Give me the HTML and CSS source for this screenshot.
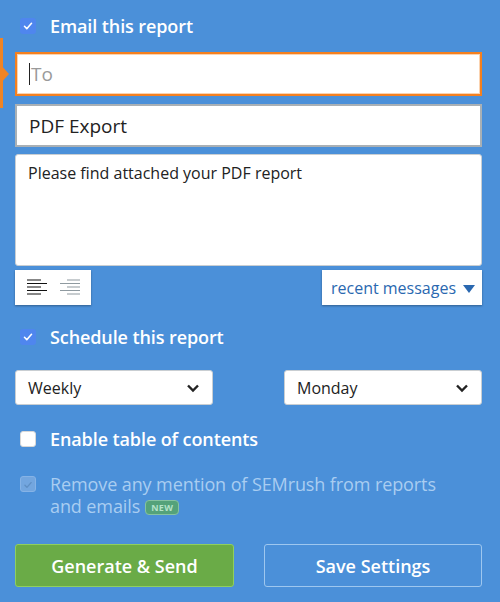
FILE: index.html
```html
<!DOCTYPE html>
<html>
<head>
<meta charset="utf-8">
<link rel="stylesheet" href="styles.css">
</head>
<body>
<div class="marker"><div class="marker-tri"></div></div>
<div class="panel">
  <div class="check-row first">
    <span class="cb checked"><svg viewBox="0 0 16 16" width="16" height="16"><path d="M4.5 8.3l2.3 2.4 4.7-5.4" fill="none" stroke="#fff" stroke-width="1.6" stroke-linecap="round" stroke-linejoin="round"/></svg></span>
    <span class="cb-label">Email this report</span>
  </div>
  <div class="field to"><span class="caret"></span><span class="ph">To</span></div>
  <div class="field subject">PDF Export</div>
  <div class="textarea">Please find attached your PDF report</div>
  <div class="toolbar">
    <div class="align-box">
      <svg width="22" height="22" viewBox="0 0 22 22"><g stroke="#111" stroke-width="1.2"><path d="M1 3h14M1 6.5h20M1 10h14M1 13.5h20M1 17h14"/></g></svg>
      <svg width="22" height="22" viewBox="0 0 22 22"><g stroke="#8f9aa0" stroke-width="1.2"><path d="M8 3h13M1 6.5h20M8 10h13M1 13.5h20M8 17h13"/></g></svg>
    </div>
    <div class="recent">recent messages <span class="tri"></span></div>
  </div>
  <div class="check-row schedule">
    <span class="cb checked"><svg viewBox="0 0 16 16" width="16" height="16"><path d="M4.5 8.3l2.3 2.4 4.7-5.4" fill="none" stroke="#fff" stroke-width="1.6" stroke-linecap="round" stroke-linejoin="round"/></svg></span>
    <span class="cb-label">Schedule this report</span>
  </div>
  <div class="selects">
    <div class="select">Weekly <svg class="chev" width="14" height="10" viewBox="0 0 14 10"><path d="M2 2.5l5 5 5-5" fill="none" stroke="#222" stroke-width="2.4"/></svg></div>
    <div class="select">Monday <svg class="chev" width="14" height="10" viewBox="0 0 14 10"><path d="M2 2.5l5 5 5-5" fill="none" stroke="#222" stroke-width="2.4"/></svg></div>
  </div>
  <div class="check-row toc">
    <span class="cb empty"></span>
    <span class="cb-label">Enable table of contents</span>
  </div>
  <div class="check-row disabled">
    <span class="cb dis"><svg viewBox="0 0 16 16" width="16" height="16"><path d="M4.5 8.3l2.3 2.4 4.7-5.4" fill="none" stroke="#5f8fc4" stroke-width="1.6" stroke-linecap="round" stroke-linejoin="round"/></svg></span>
    <div class="cb-label multi">
      <span class="line">Remove any mention of SEMrush from reports</span>
      <span class="line last"><span>and emails</span><span class="badge">NEW</span></span>
    </div>
  </div>
  <div class="buttons">
    <div class="btn green">Generate &amp; Send</div>
    <div class="btn outline">Save Settings</div>
  </div>
</div>
</body>
</html>
```
FILE: styles.css
```css
* { box-sizing: border-box; }
html, body { margin: 0; }
body {
  background: #4b90d9;
  font-family: "Open Sans", "Noto Sans", sans-serif;
  width: 500px;
  height: 602px;
  overflow: hidden;
  position: relative;
}
.marker {
  position: absolute;
  left: 0;
  top: 38px;
  width: 3px;
  height: 70px;
  background: #f08424;
}
.marker-tri {
  position: absolute;
  left: 0;
  top: 26px;
  width: 0;
  height: 0;
  border-top: 10px solid transparent;
  border-bottom: 10px solid transparent;
  border-left: 9px solid #f08424;
}
.panel {
  padding: 0 18px 0 15px;
  display: flex;
  flex-direction: column;
}
.check-row {
  display: flex;
  align-items: center;
  color: #fff;
  font-size: 18px;
  font-weight: 600;
}
.check-row.first { height: 52px; padding-left: 5px; padding-bottom: 0; }
.cb {
  width: 16px;
  height: 16px;
  border-radius: 3px;
  flex: none;
  display: flex;
  margin-right: 14px;
}
.cb.checked { background: #4f86ee; }
.cb.empty { background: #fff; border: 1px solid #d8d8d8; }
.cb.dis { background: #73a6df; border: 1px solid #86b3e6; }
.cb-label { letter-spacing: -0.1px; }
.field {
  height: 44px;
  background: #fff;
  display: flex;
  align-items: center;
  padding-left: 12px;
  font-size: 19px;
  color: #222;
}
.field.to {
  border: 2px solid #f5801f;
  box-shadow: inset 0 0 0 1px #fbd3b0;
  color: #9a9a9a;
}
.caret {
  width: 1px;
  height: 22px;
  background: #222;
  margin-right: 1px;
}
.field.subject {
  margin-top: 8px;
  height: 43px;
  border: 2px solid #a9b0b5;
}
.textarea {
  margin-top: 7px;
  height: 112px;
  background: #fff;
  border: 1px solid #c9ced2;
  border-radius: 3px;
  padding: 7px 12px;
  font-size: 16px;
  color: #222;
}
.toolbar {
  margin-top: 4px;
  display: flex;
  justify-content: space-between;
  align-items: flex-start;
  height: 35px;
}
.align-box {
  width: 76px;
  height: 35px;
  background: #fff;
  box-shadow: 0 1px 2px rgba(0,0,0,0.35);
  display: flex;
  align-items: center;
  padding-left: 11px;
  gap: 11px;
}
.recent {
  width: 160px;
  height: 35px;
  background: #fff;
  box-shadow: 0 1px 2px rgba(0,0,0,0.35);
  display: flex;
  align-items: center;
  justify-content: center;
  color: #2a68b0;
  font-size: 16px;
  gap: 7px;
  padding-left: 2px;
}
.tri {
  width: 0;
  height: 0;
  border-left: 6px solid transparent;
  border-right: 6px solid transparent;
  border-top: 8px solid #2a68b0;
  margin-top: 2px;
}
.check-row.schedule { height: 54px; margin-top: 5px; padding-left: 5px; }
.selects {
  display: flex;
  justify-content: space-between;
  margin-top: 6px;
}
.select {
  width: 198px;
  height: 35px;
  background: #fff;
  border: 1px solid #c9ced2;
  border-radius: 3px;
  display: flex;
  align-items: center;
  justify-content: space-between;
  padding: 0 12px 0 12px;
  font-size: 16px;
  color: #222;
}
.check-row.toc { height: 34px; margin-top: 17px; padding-left: 5px; }
.check-row.disabled {
  margin-top: 17px;
  padding-left: 5px;
  align-items: flex-start;
  color: #a9cdf1;
  line-height: 22px;
  font-weight: 500;
}
.multi { display: flex; flex-direction: column; }
.line { display: block; }
.line.last { display: flex; align-items: center; gap: 5px; }
.check-row.disabled .cb { margin-top: 3px; }
.badge {
  display: inline-block;
  background: #54a27a;
  color: #b3e3c9;
  border: 1px solid #86c3a0;
  border-radius: 4px;
  font-size: 9px;
  font-weight: 700;
  line-height: 11px;
  padding: 1px 5px;
  margin-top: 3px;
  letter-spacing: 0.3px;
}
.buttons {
  display: flex;
  justify-content: space-between;
  margin-top: 27px;
}
.btn {
  height: 43px;
  width: 219px;
  border-radius: 3px;
  display: flex;
  align-items: center;
  justify-content: center;
  color: #fff;
  font-size: 18px;
  font-weight: 600;
}
.btn.green { background: #6aab47; border: 1px solid #8fcf5e; }
.btn.outline { width: 218px; border: 1px solid #9ec7ef; }
```
